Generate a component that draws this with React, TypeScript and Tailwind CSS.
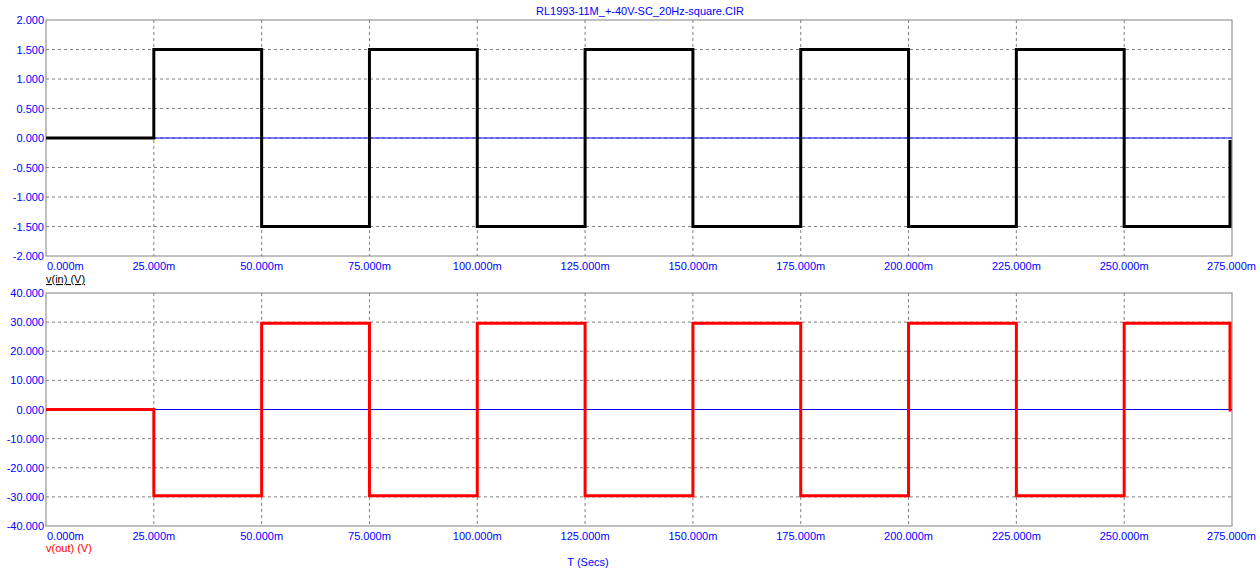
const X0 = 46;
const X1 = 1232;
const xs = (t: number) => X0 + ((X1 - X0) * t) / 275;

const top = { y0: 20, y1: 256, min: -2, max: 2 };
const bot = { y0: 293, y1: 526, min: -40, max: 40 };
const ys = (p: typeof top, v: number) => p.y0 + ((p.max - v) / (p.max - p.min)) * (p.y1 - p.y0);

function wave(p: typeof top, amp: number, sign: number) {
  const pts: string[] = [`${X0},${ys(p, 0)}`, `${xs(25)},${ys(p, 0)}`];
  let t = 25;
  let s = sign;
  while (t < 275) {
    const y = ys(p, amp * s);
    pts.push(`${xs(t)},${y}`, `${xs(t + 25) - (t + 25 >= 275 ? 2 : 0)},${y}`);
    t += 25;
    s = -s;
  }
  pts.push(`${xs(275) - 2},${ys(p, 0) + 2}`);
  return pts.join(" ");
}

const xticks = Array.from({ length: 12 }, (_, i) => i * 25);

function Panel({ p, step }: { p: typeof top; step: number }) {
  const vals: number[] = [];
  for (let v = p.max; v >= p.min - 1e-9; v -= step) vals.push(v);
  return (
    <g>
      {vals.slice(1, -1).map((v) => (
        <line key={v} x1={X0} x2={X1} y1={ys(p, v)} y2={ys(p, v)} stroke="#808080" strokeDasharray="3 3" />
      ))}
      {xticks.slice(1, -1).map((t) => (
        <line key={t} x1={xs(t)} x2={xs(t)} y1={p.y0} y2={p.y1} stroke="#808080" strokeDasharray="3 3" />
      ))}
      <rect x={X0} y={p.y0} width={X1 - X0} height={p.y1 - p.y0} fill="none" stroke="#808080" />
      <line x1={X0} x2={X1} y1={ys(p, 0)} y2={ys(p, 0)} stroke="#0000ff" />
      {vals.map((v) => (
        <text key={v} x={44} y={ys(p, v) + 4} textAnchor="end" fill="#0000ff">
          {v.toFixed(3)}
        </text>
      ))}
      {xticks.map((t, i) => (
        <text
          key={t}
          x={i === 0 ? X0 + 1 : i === xticks.length - 1 ? 1256 : xs(t)}
          y={p.y1 + 14}
          textAnchor={i === 0 ? "start" : i === xticks.length - 1 ? "end" : "middle"}
          fill="#0000ff"
        >
          {t.toFixed(3)}m
        </text>
      ))}
    </g>
  );
}

export default function App() {
  return (
    <div className="w-[1260px] h-[574px] bg-white overflow-hidden">
      <svg width="1260" height="574" className="block" style={{ fontFamily: "'Liberation Sans', Arial, sans-serif", fontSize: 11 }}>
        <text x={640} y={15} textAnchor="middle" fill="#0000ff">RL1993-11M_+-40V-SC_20Hz-square.CIR</text>
        <Panel p={top} step={0.5} />
        <Panel p={bot} step={10} />
        <polyline points={wave(top, 1.5, 1)} fill="none" stroke="#000" strokeWidth={3} />
        <polyline points={wave(bot, 29.6, -1)} fill="none" stroke="#ff0000" strokeWidth={3} />
        <text x={46} y={283} fill="#000" textDecoration="underline">v(in) (V)</text>
        <text x={46} y={552} fill="#ff0000">v(out) (V)</text>
        <text x={588} y={566} textAnchor="middle" fill="#0000ff">T (Secs)</text>
      </svg>
    </div>
  );
}
